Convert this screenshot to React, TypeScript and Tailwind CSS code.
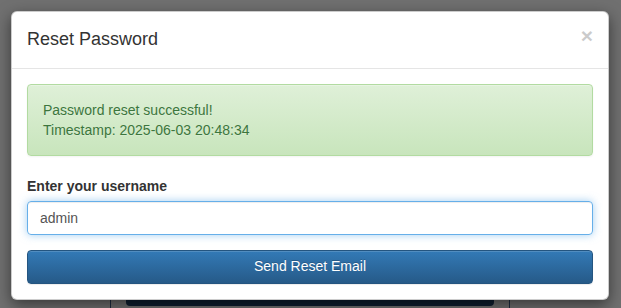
import React from "react";

const font = { fontFamily: '"Liberation Sans", Arial, sans-serif' };

export default function App() {
    return (
        <div
            className="relative w-[621px] h-[308px] overflow-hidden bg-[#707070]"
            style={font}
        >
            {/* page behind the backdrop */}
            <div className="ml-[110px] mt-[200px] w-[400px] h-[108px] border-x border-[#1e2d40] pt-[90px] px-[15px]">
                <div className="h-[16px] rounded-b-[4px] bg-[#0f1f31]" />
            </div>

            {/* modal */}
            <div className="absolute left-[11px] top-[11px] w-[598px] rounded-[6px] border border-black/20 bg-white shadow-[0_5px_15px_rgba(0,0,0,0.5)]">
                <div className="flex items-start justify-between p-[15px] border-b border-[#e5e5e5]">
                    <h4 className="text-[18px] leading-[1.42857] text-[#333]">
                        Reset Password
                    </h4>
                    <button className="mt-[-2px] text-[21px] font-bold leading-none text-black opacity-20 [text-shadow:0_1px_0_#fff]">
                        ×
                    </button>
                </div>
                <div className="p-[15px]">
                    <div className="mb-[20px] p-[15px] rounded-[4px] border border-[#b2dba1] bg-linear-to-b from-[#dff0d8] to-[#c8e5bc] text-[14px] leading-[20px] text-[#3c763d] shadow-[inset_0_1px_0_rgba(255,255,255,0.25),0_1px_2px_rgba(0,0,0,0.05)] [text-shadow:0_1px_0_rgba(255,255,255,0.2)]">
                        <div>Password reset successful!</div>
                        <div>Timestamp: 2025-06-03 20:48:34</div>
                    </div>
                    <div className="mb-[15px]">
                        <label className="block mb-[5px] text-[14px] leading-[20px] font-bold text-[#333]">
                            Enter your username
                        </label>
                        <input
                            className="block w-full h-[34px] px-3 py-1.5 text-[14px] text-[#555] rounded-[4px] border border-[#66afe9] outline-none shadow-[inset_0_1px_1px_rgba(0,0,0,0.075),0_0_8px_rgba(102,175,233,0.6)]"
                            defaultValue="admin"
                        />
                    </div>
                    <button className="block w-full h-[34px] rounded-[4px] border border-[#245580] bg-linear-to-b from-[#337ab7] to-[#265a88] text-[14px] text-white [text-shadow:0_-1px_0_rgba(0,0,0,0.2)] shadow-[inset_0_1px_0_rgba(255,255,255,0.15),0_1px_1px_rgba(0,0,0,0.075)]">
                        Send Reset Email
                    </button>
                </div>
            </div>
        </div>
    );
}
